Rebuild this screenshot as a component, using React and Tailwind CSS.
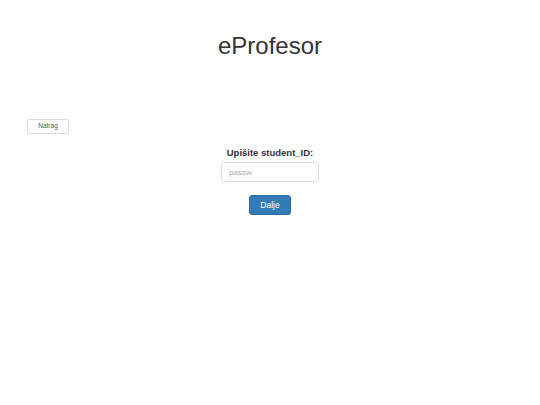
export default function App() {
  return (
    <div className="min-h-[405px] w-full bg-white font-['Liberation_Sans',Arial,sans-serif] text-[#333]">
      <h1 className="pt-[33px] text-center text-[24px] leading-[26px] font-normal">eProfesor</h1>

      <div className="mt-[60px] px-[27px]">
        <button
          type="button"
          className="flex h-[15px] w-[42px] items-center justify-center rounded-[2px] border border-[#ddd] bg-white text-[6.5px] leading-none text-[#555]"
        >
          Natrag
        </button>
      </div>

      <form className="mt-[12px] flex flex-col items-center" onSubmit={(e) => e.preventDefault()}>
        <label className="h-[14px] text-[9.5px] leading-[14px] font-bold">Upišite student_ID:</label>
        <input
          type="password"
          placeholder="passw"
          className="mt-[2px] h-[20px] w-[98px] rounded-[3px] border border-[#ddd] px-[7px] text-[8px] text-[#555] placeholder:text-[#aaa] outline-none"
        />
        <button
          type="submit"
          className="mt-[13px] h-[20px] w-[42px] rounded-[3px] border border-[#2e6da4] bg-[#337ab7] text-[8.5px] text-white"
        >
          Dalje
        </button>
      </form>
    </div>
  );
}
